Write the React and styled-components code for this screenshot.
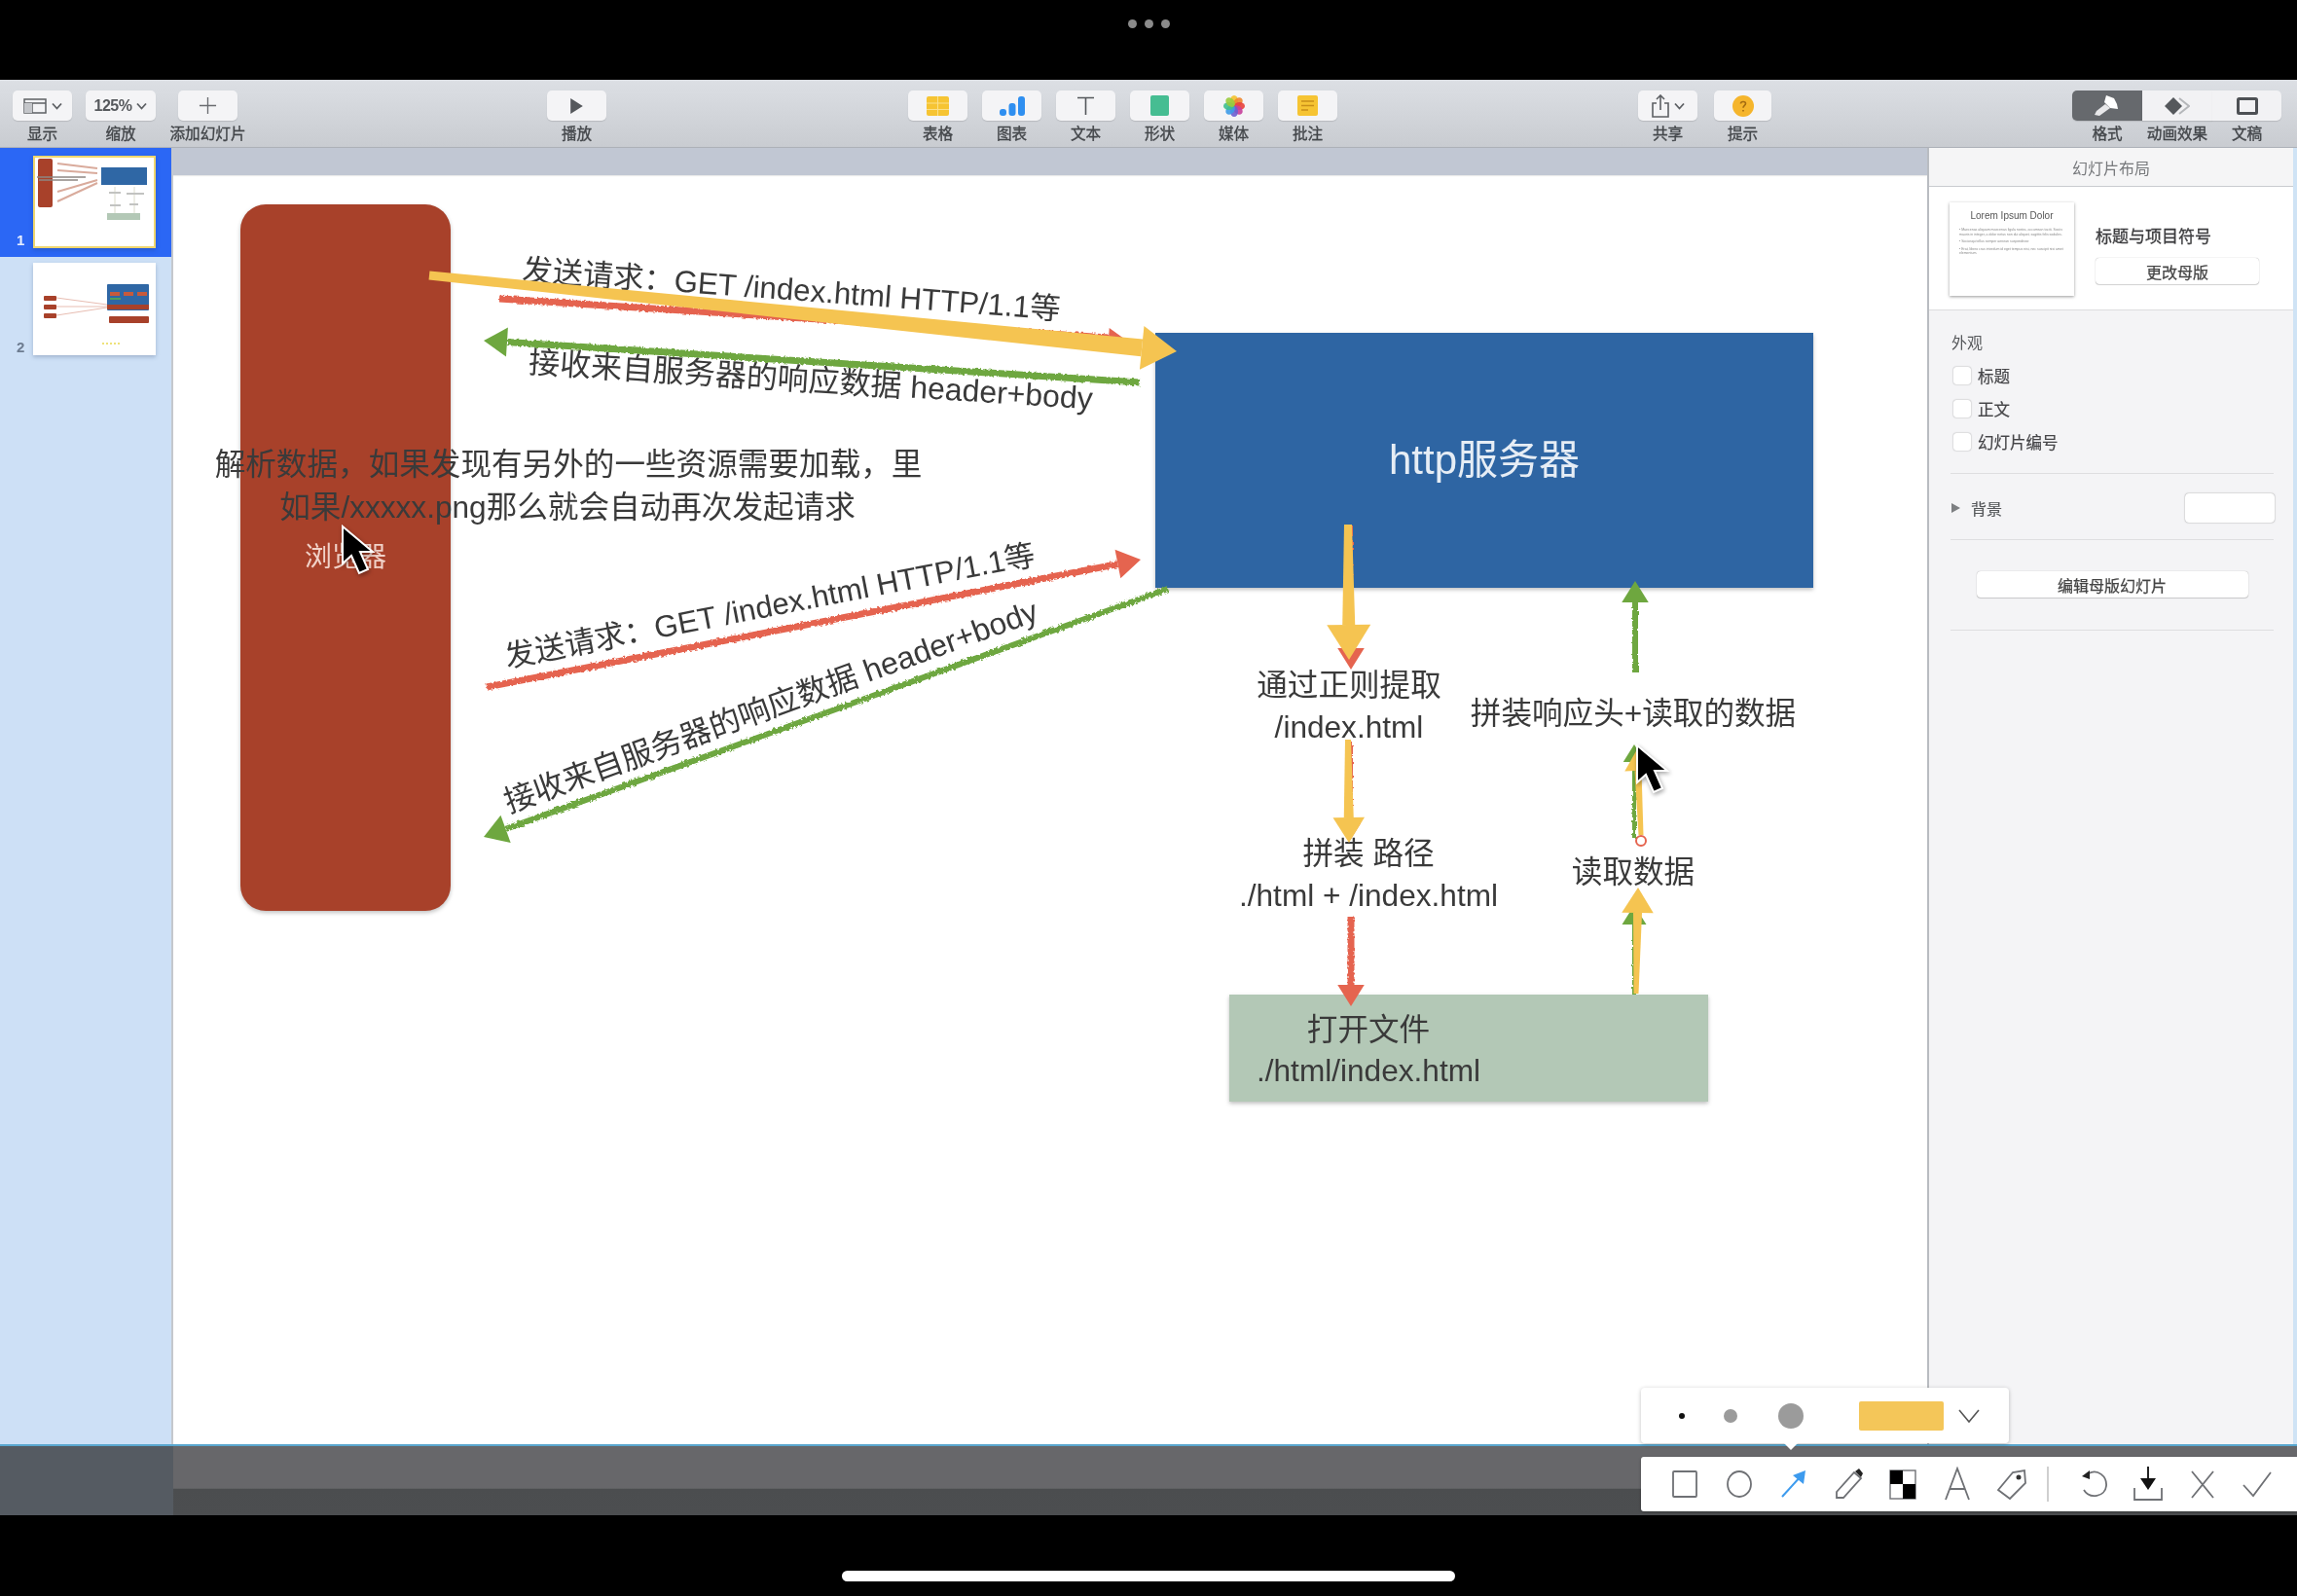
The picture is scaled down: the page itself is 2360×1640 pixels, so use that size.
import React from 'react';
import styled, { createGlobalStyle } from 'styled-components';

const FONT = '"Liberation Sans", "Noto Sans CJK SC", sans-serif';
const ORIGIN_X = 178;
const ORIGIN_Y = 152;

const GlobalStyle = createGlobalStyle`
  html, body { margin: 0; padding: 0; background: #000; }
  * { box-sizing: border-box; }
`;

const Page = styled.div`
  width: 2360px;
  height: 1640px;
  position: relative;
  overflow: hidden;
  display: flex;
  flex-direction: column;
  background: #000;
  font-family: ${FONT};
  filter: blur(0.55px);
`;

const StatusBar = styled.div`
  height: 82px;
  display: flex;
  justify-content: center;
  gap: 8px;
  padding-top: 20px;
`;

const StatusDot = styled.span`
  width: 9px;
  height: 9px;
  border-radius: 50%;
  background: #8b8b8b;
`;

const HomeArea = styled.div`
  flex: 1;
  display: flex;
  justify-content: center;
  padding-top: 57px;
`;

const HomeBar = styled.div`
  width: 630px;
  height: 11px;
  border-radius: 6px;
  background: #fff;
`;

const Toolbar = styled.div`
  height: 70px;
  display: flex;
  padding: 11px 0 0 13px;
  background: linear-gradient(#dcdfe4, #c9ccd1);
  border-bottom: 1px solid #adb1b8;
`;

const ToolItem = styled.div`
  width: ${(p) => p.$w || 61}px;
  margin-left: ${(p) => p.$ml || 0}px;
  display: flex;
  flex-direction: column;
  align-items: center;
`;

const ToolButton = styled.div`
  width: 100%;
  height: 31px;
  border-radius: 5px;
  background: #f4f4f6;
  box-shadow: 0 1px 1px rgba(0, 0, 0, 0.12);
  display: flex;
  align-items: center;
  justify-content: center;
  gap: 5px;
  font-size: 16px;
  font-weight: 700;
  letter-spacing: -0.5px;
  color: #55585c;
`;

const ToolLabel = styled.div`
  margin-top: 5px;
  font-size: 15.6px;
  line-height: 17px;
  white-space: nowrap;
  color: #43464a;
  -webkit-text-stroke: 0.35px #43464a;
`;

const Segmented = styled.div`
  margin-left: 309px;
  width: 215px;
  display: grid;
  grid-template-columns: 72px 72px 71px;
`;

const SegmentItem = styled.div`
  display: flex;
  flex-direction: column;
  align-items: center;
`;

const SegmentButton = styled.div`
  width: 100%;
  height: 31px;
  display: flex;
  align-items: center;
  justify-content: center;
  background: ${(p) => (p.$active ? '#66696d' : '#f2f2f4')};
  border-radius: ${(p) => p.$radius || '0'};
  box-shadow: 0 1px 1px rgba(0, 0, 0, 0.12);
`;

const Workspace = styled.div`
  height: 1332px;
  display: flex;
`;

const Sidebar = styled.div`
  width: 178px;
  background: #cde0f6;
  border-right: 2px solid #c4c8cd;
`;

const SlideRow = styled.div`
  height: ${(p) => p.$h}px;
  display: flex;
  align-items: flex-end;
  padding: 0 0 ${(p) => p.$pb}px 17px;
  gap: 8px;
  background: ${(p) => (p.$selected ? '#2b67f5' : 'transparent')};
`;

const SlideNumber = styled.span`
  width: 9px;
  font-size: 15px;
  line-height: 16px;
  color: ${(p) => (p.$selected ? '#e6eeff' : '#6d7c90')};
  font-weight: 700;
`;

const SlideThumb = styled.svg`
  width: 126px;
  height: 95px;
  display: block;
  background: #fff;
  box-shadow: 0 2px 4px rgba(30, 50, 90, 0.25);
  outline: ${(p) => (p.$selected ? '2px solid #efd66e' : 'none')};
  outline-offset: -2px;
`;

const Canvas = styled.div`
  flex: 1;
  position: relative;
  background: #fff;
  overflow: hidden;
`;

const CanvasHeader = styled.div`
  height: 28px;
  background: #c1c7d3;
  box-shadow: 0 1px 1px rgba(0, 0, 0, 0.08);
`;

const Block = styled.div`
  position: absolute;
  left: ${(p) => p.$x - ORIGIN_X}px;
  top: ${(p) => p.$y - ORIGIN_Y}px;
  width: ${(p) => p.$w}px;
  height: ${(p) => p.$h}px;
  background: ${(p) => p.$bg};
  border-radius: ${(p) => p.$radius || 0}px;
  box-shadow: 0 2px 4px rgba(0, 0, 0, 0.25);
`;

const SlideText = styled.div`
  position: absolute;
  left: ${(p) => p.$cx - ORIGIN_X}px;
  top: ${(p) => p.$cy - ORIGIN_Y}px;
  transform: translate(-50%, -50%) rotate(${(p) => p.$rot || 0}deg);
  white-space: pre;
  font-size: ${(p) => p.$size || 31.6}px;
  line-height: 1.2;
  color: ${(p) => p.$color || '#3a3a3a'};
`;

const ArrowLayer = styled.svg`
  position: absolute;
  left: 0;
  top: 0;
  width: 1802px;
  height: 1332px;
`;

const Cursor = styled.svg`
  position: absolute;
  left: ${(p) => p.$x - ORIGIN_X}px;
  top: ${(p) => p.$y - ORIGIN_Y}px;
  width: 46px;
  height: 56px;
  filter: drop-shadow(1px 2px 2px rgba(0, 0, 0, 0.35));
`;

const Inspector = styled.div`
  width: 380px;
  display: flex;
  flex-direction: column;
  background: #f4f4f6;
  border-left: 2px solid #b9bcc1;
  border-right: 4px solid #cfe3f5;
`;

const InspectorTitle = styled.div`
  height: 40px;
  display: flex;
  align-items: center;
  justify-content: center;
  background: #f5f5f6;
  border-bottom: 1px solid #c9cbcf;
  font-size: 16px;
  color: #77797c;
`;

const MasterSection = styled.div`
  height: 127px;
  display: flex;
  padding: 16px 0 0 21px;
  gap: 22px;
  background: #fff;
  border-bottom: 1px solid #dddddf;
`;

const MasterThumb = styled.div`
  width: 128px;
  height: 96px;
  padding: 8px 10px;
  background: #fff;
  box-shadow: 0 1px 3px rgba(0, 0, 0, 0.4);
  text-align: center;
  font-size: 10px;
  color: #555;
`;

const MasterBody = styled.div`
  margin-top: 7px;
  text-align: left;
  font-size: 3.5px;
  line-height: 4.5px;
  color: #888;
`;

const MasterBullet = styled.p`
  margin: 0 0 3px;
`;

const MasterInfo = styled.div`
  padding-top: 25px;
  width: 168px;
`;

const MasterName = styled.div`
  font-size: 17px;
  line-height: 22px;
  margin-bottom: 10px;
  white-space: nowrap;
  color: #3d3d3f;
  -webkit-text-stroke: 0.3px #3d3d3f;
`;

const PanelButton = styled.div`
  width: ${(p) => p.$w}px;
  height: 27px;
  margin: 0 auto;
  display: flex;
  align-items: center;
  justify-content: center;
  border-radius: 4px;
  background: #fff;
  box-shadow: 0 0 1px rgba(0, 0, 0, 0.4), 0 1px 1px rgba(0, 0, 0, 0.15);
  font-size: 16px;
  color: #444;
  -webkit-text-stroke: 0.25px #444;
`;

const PanelSection = styled.div`
  margin: 0 20px 0 22px;
  padding: ${(p) => p.$pad};
  border-bottom: 1px solid #dedee0;
`;

const SectionHeading = styled.div`
  margin-left: 1px;
  font-size: 16px;
  line-height: 20px;
  color: #55575a;
  margin-bottom: 6px;
`;

const CheckRow = styled.div`
  height: 34px;
  display: flex;
  align-items: center;
  gap: 7px;
  margin-left: 3px;
  font-size: 16.5px;
  color: #454548;
  -webkit-text-stroke: 0.2px #454548;
`;

const CheckBox = styled.span`
  width: 18px;
  height: 18px;
  border-radius: 3px;
  background: #fff;
  box-shadow: 0 0 1.5px rgba(0, 0, 0, 0.45);
`;

const BackgroundRow = styled.div`
  display: flex;
  align-items: center;
  font-size: 16px;
  color: #55575a;
  gap: 11px;
  -webkit-text-stroke: 0.2px #55575a;
`;

const Triangle = styled.span`
  margin-left: 1px;
  width: 0;
  height: 0;
  border-left: 9px solid #7d7f82;
  border-top: 5px solid transparent;
  border-bottom: 5px solid transparent;
`;

const ColorWell = styled.div`
  width: 92px;
  height: 30px;
  margin-left: auto;
  margin-right: -1px;
  border-radius: 4px;
  background: #fff;
  box-shadow: 0 0 1.5px rgba(0, 0, 0, 0.5);
`;

const BottomBand = styled.div`
  height: 73px;
  display: flex;
  border-top: 2px solid #59a7cf;
`;

const BandSide = styled.div`
  width: 178px;
  background: #555b62;
`;

const BandMain = styled.div`
  flex: 1;
  background: linear-gradient(#67676a 0, #67676a 61%, #4b4d4f 62%, #4c4e50 100%);
`;

const MarkupPopover = styled.div`
  position: absolute;
  left: 1686px;
  top: 1426px;
  width: 378px;
  height: 57px;
  display: flex;
  align-items: center;
  border-radius: 4px;
  background: #fff;
  box-shadow: 0 1px 4px rgba(0, 0, 0, 0.25);

  &::after {
    content: '';
    position: absolute;
    left: 147px;
    bottom: -7px;
    border-left: 7px solid transparent;
    border-right: 7px solid transparent;
    border-top: 7px solid #fff;
  }
`;

const SizeDot = styled.span`
  position: absolute;
  left: ${(p) => p.$x}px;
  width: ${(p) => p.$w}px;
  height: ${(p) => p.$h}px;
  border-radius: 50%;
  background: ${(p) => p.$color};
`;

const Swatch = styled.div`
  position: absolute;
  left: 224px;
  width: 87px;
  height: 30px;
  border-radius: 2px;
  background: #f4c659;
`;

const PopoverChevron = styled.svg`
  position: absolute;
  left: 325px;
  width: 24px;
  height: 16px;
`;

const MarkupBar = styled.div`
  position: absolute;
  left: 1686px;
  top: 1497px;
  width: 674px;
  height: 56px;
  display: flex;
  align-items: center;
  padding-left: 29px;
  border-radius: 3px 0 0 3px;
  background: #fff;
  box-shadow: 0 1px 3px rgba(0, 0, 0, 0.3);
`;

const MarkupIcon = styled.svg`
  width: 32px;
  height: 36px;
  margin-right: ${(p) => p.$gap || 24}px;
  flex: none;
`;

const MarkupDivider = styled.span`
  width: 2px;
  height: 36px;
  margin-right: 30px;
  background: #cfcfcf;
`;

const SLATE = '#5d6064';

const PanelIcon = () => (
  <svg width="24" height="16" viewBox="0 0 24 16">
    <rect x="1" y="1" width="22" height="14" fill="none" stroke={SLATE} strokeWidth="1.5" />
    <path d="M1 5H23M9 5V15" stroke={SLATE} strokeWidth="1.5" />
    <rect x="1" y="5" width="8" height="10" fill="#c4c6ca" />
  </svg>
);

const SmallChevron = () => (
  <svg width="11" height="8" viewBox="0 0 11 8">
    <path d="M1 1.5L5.5 6.5L10 1.5" fill="none" stroke={SLATE} strokeWidth="1.8" />
  </svg>
);

const PlusIcon = () => (
  <svg width="19" height="19" viewBox="0 0 20 20">
    <path d="M10 1V19M1 10H19" stroke="#6a6c70" strokeWidth="1.4" />
  </svg>
);

const PlayIcon = () => (
  <svg width="15" height="18" viewBox="0 0 16 20">
    <path d="M1 1L15 10L1 19Z" fill="#55585c" />
  </svg>
);

const TableIcon = () => (
  <svg width="23" height="20" viewBox="0 0 23 20">
    <rect width="23" height="20" rx="2" fill="#f6c433" />
    <path d="M0 7H23M0 13.5H23M11.5 0V20" stroke="#fbe08a" strokeWidth="1" />
  </svg>
);

const ChartIcon = () => (
  <svg width="26" height="20" viewBox="0 0 26 20">
    <rect x="0" y="13" width="7" height="7" rx="3" fill="#2f8ff0" />
    <rect x="9.5" y="7" width="7" height="13" rx="3" fill="#2f8ff0" />
    <rect x="19" y="0" width="7" height="20" rx="3" fill="#2f8ff0" />
  </svg>
);

const TextIcon = () => (
  <svg width="19" height="19" viewBox="0 0 19 19">
    <path d="M1 1.5H18M9.5 1.5V19" stroke="#55585c" strokeWidth="1.6" />
  </svg>
);

const ShapeIcon = () => (
  <svg width="19" height="21" viewBox="0 0 19 21">
    <rect width="19" height="21" rx="2" fill="#46bd92" />
  </svg>
);

const MediaIcon = () => (
  <svg width="22" height="22" viewBox="-11 -11 22 22">
    {['#f4c12e', '#f0862f', '#e8413c', '#c63f9b', '#6d5fd0', '#3d9be8', '#3fbf8e', '#9acb3c'].map((c, i) => (
      <ellipse key={c} cx="0" cy="-5.5" rx="4" ry="5.5" fill={c} opacity="0.9" transform={`rotate(${i * 45})`} />
    ))}
  </svg>
);

const NoteIcon = () => (
  <svg width="21" height="21" viewBox="0 0 21 21">
    <rect width="21" height="21" rx="2" fill="#f6c433" />
    <path d="M4 6H17M4 10.5H17M4 15H11" stroke="#c98f1b" strokeWidth="1.4" />
  </svg>
);

const ShareIcon = () => (
  <svg width="18" height="24" viewBox="0 0 18 24">
    <path d="M5 9H1V23H17V9H13M9 16V1M5 5L9 1L13 5" fill="none" stroke={SLATE} strokeWidth="1.6" />
  </svg>
);

const TipIcon = () => (
  <svg width="22" height="22" viewBox="0 0 22 22">
    <circle cx="11" cy="11" r="11" fill="#f5b52c" />
    <path d="M8.5 8.5C8.5 5.8 13.5 5.8 13.5 8.5C13.5 10.5 11 10.3 11 12.8M11 15V16.6" fill="none" stroke="#a46c12" strokeWidth="1.6" />
  </svg>
);

const BrushIcon = () => (
  <svg width="28" height="24" viewBox="0 0 28 24">
    <path d="M13 1L21 4L24 10L25 15L17 14L11 8Z" fill="#fff" />
    <path d="M12 10L17 14L6 22L1 21L3 17Z" fill="#e8e8ea" />
  </svg>
);

const DiamondIcon = () => (
  <svg width="26" height="18" viewBox="0 0 26 18">
    <path d="M15 1L25 9L15 17" fill="none" stroke="#b5b7ba" strokeWidth="2" />
    <path d="M9 0L18 9L9 18L0 9Z" fill="#55585c" />
  </svg>
);

const DocIcon = () => (
  <svg width="22" height="18" viewBox="0 0 22 18">
    <rect x="1.5" y="1.5" width="19" height="15" rx="1" fill="none" stroke="#4d5054" strokeWidth="3" />
  </svg>
);

const CursorIcon = ({ x, y }) => (
  <Cursor $x={x} $y={y} viewBox="0 0 46 56">
    <path d="M2 2L2 40L11 32L19 50L28 46L20 28L33 28Z" fill="#000" stroke="#fff" strokeWidth="2" />
  </Cursor>
);

// yellow marker arrows get wider toward the head, the others are a plain line
const Arrow = ({ x1, y1, x2, y2, color, width, head, tail, rough }) => {
  const len = Math.hypot(x2 - x1, y2 - y1);
  const ux = (x2 - x1) / len;
  const uy = (y2 - y1) / len;
  const nx = -uy;
  const ny = ux;
  const bx = x2 - ux * head;
  const by = y2 - uy * head;
  const startW = tail ?? width;
  const shaft = [
    [x1 + (nx * startW) / 2, y1 + (ny * startW) / 2],
    [bx + (nx * width) / 2, by + (ny * width) / 2],
    [bx - (nx * width) / 2, by - (ny * width) / 2],
    [x1 - (nx * startW) / 2, y1 - (ny * startW) / 2],
  ];
  const tip = [
    [x2, y2],
    [bx + (nx * head) / 1.6, by + (ny * head) / 1.6],
    [bx - (nx * head) / 1.6, by - (ny * head) / 1.6],
  ];
  const toPoints = (list) => list.map((p) => p.join(',')).join(' ');
  return (
    <g>
      <polygon points={toPoints(shaft)} fill={color} filter={rough ? 'url(#rough)' : undefined} />
      <polygon points={toPoints(tip)} fill={color} />
    </g>
  );
};

const RED = '#e5644f';
const GREEN = '#6ea73f';
const YELLOW = '#f5c451';

const Arrows = () => (
  <ArrowLayer viewBox={`${ORIGIN_X} ${ORIGIN_Y} 1802 1332`}>
    <defs>
      <filter id="rough" x="-5%" y="-100%" width="110%" height="300%" filterUnits="objectBoundingBox" primitiveUnits="userSpaceOnUse">
        <feTurbulence type="fractalNoise" baseFrequency="0.35" numOctaves="2" seed="4" />
        <feDisplacementMap in="SourceGraphic" scale="4" />
      </filter>
    </defs>
    <Arrow x1={513} y1={307} x2={1155} y2={348} color={RED} width={7} head={16} rough />
    <Arrow x1={1171} y1={393} x2={497} y2={350} color={GREEN} width={7} head={24} rough />
    <Arrow x1={441} y1={283} x2={1209} y2={361} color={YELLOW} width={18} tail={9} head={36} />
    <Arrow x1={500} y1={706} x2={1172} y2={575} color={RED} width={7} head={24} rough />
    <Arrow x1={1200} y1={605} x2={497} y2={860} color={GREEN} width={6} head={24} rough />
    <Arrow x1={1388} y1={540} x2={1388} y2={688} color={RED} width={4} head={22} rough />
    <Arrow x1={1385} y1={539} x2={1386} y2={678} color={YELLOW} width={13} tail={8} head={36} />
    <Arrow x1={1388} y1={762} x2={1388} y2={862} color={RED} width={4} head={16} rough />
    <Arrow x1={1385} y1={760} x2={1386} y2={866} color={YELLOW} width={10} tail={6} head={26} />
    <Arrow x1={1388} y1={942} x2={1388} y2={1034} color={RED} width={7} head={22} rough />
    <Arrow x1={1680} y1={691} x2={1680} y2={597} color={GREEN} width={6} head={22} rough />
    <Arrow x1={1679} y1={861} x2={1679} y2={765} color={GREEN} width={4} head={18} rough />
    <Arrow x1={1686} y1={858} x2={1682} y2={770} color={YELLOW} width={7} tail={5} head={22} />
    <Arrow x1={1679} y1={1022} x2={1679} y2={930} color={GREEN} width={4} head={20} rough />
    <Arrow x1={1681} y1={1021} x2={1683} y2={912} color={YELLOW} width={9} tail={5} head={26} />
    <circle cx="1686" cy="864" r="5" fill="#fff" stroke={RED} strokeWidth="2" />
  </ArrowLayer>
);

const FirstThumb = () => (
  <SlideThumb $selected viewBox="34 160 126 95">
    <rect x="39" y="163" width="15" height="50" rx="2" fill="#a8412a" />
    <rect x="104" y="172" width="47" height="18" fill="#2f67a5" />
    <rect x="110" y="219" width="34" height="7" fill="#b3c8b6" />
    <path d="M59 168L100 173M59 175L100 178M59 197L100 185M59 207L100 188" stroke="#d9ab9c" strokeWidth="2" />
    <path d="M38 182L88 182M40 185L80 185" stroke="#8d8682" strokeWidth="1.6" />
    <path d="M118 192V219M138 192V219" stroke="#dcdccc" strokeWidth="1" />
    <path d="M112 198H124M130 199H148M113 211H124M133 210H142" stroke="#c2c3c1" strokeWidth="2" />
  </SlideThumb>
);

const SecondThumb = () => (
  <SlideThumb viewBox="34 270 126 95">
    <rect x="110" y="292" width="43" height="27" rx="1" fill="#2f67a5" />
    <rect x="110" y="313" width="43" height="5" fill="#a8412a" />
    <path d="M113 302H123M127 302H137M141 302H151" stroke="#c65a3c" strokeWidth="4" />
    <path d="M113 307H124" stroke="#4f9e5a" strokeWidth="2" />
    <rect x="112" y="325" width="41" height="7" rx="1" fill="#a8412a" />
    <rect x="45" y="304" width="13" height="5" rx="1" fill="#a8412a" />
    <rect x="45" y="313" width="13" height="5" rx="1" fill="#a8412a" />
    <rect x="45" y="322" width="13" height="5" rx="1" fill="#a8412a" />
    <path d="M58 306L110 313M58 315L110 315M58 324L110 316" stroke="#e8bdb2" strokeWidth="1" />
    <path d="M105 353H125" stroke="#eee27a" strokeWidth="2" strokeDasharray="2 2" />
  </SlideThumb>
);

const TOOLS = [
  ['表格', <TableIcon key="t" />],
  ['图表', <ChartIcon key="c" />],
  ['文本', <TextIcon key="x" />],
  ['形状', <ShapeIcon key="s" />],
  ['媒体', <MediaIcon key="m" />],
  ['批注', <NoteIcon key="n" />],
];

const TopToolbar = () => (
  <Toolbar>
    <ToolItem>
      <ToolButton><PanelIcon /><SmallChevron /></ToolButton>
      <ToolLabel>显示</ToolLabel>
    </ToolItem>
    <ToolItem $w={72} $ml={14}>
      <ToolButton>125%<SmallChevron /></ToolButton>
      <ToolLabel>缩放</ToolLabel>
    </ToolItem>
    <ToolItem $ml={23}>
      <ToolButton><PlusIcon /></ToolButton>
      <ToolLabel>添加幻灯片</ToolLabel>
    </ToolItem>
    <ToolItem $ml={318}>
      <ToolButton><PlayIcon /></ToolButton>
      <ToolLabel>播放</ToolLabel>
    </ToolItem>
    {TOOLS.map(([label, icon], i) => (
      <ToolItem key={label} $ml={i === 0 ? 310 : 15}>
        <ToolButton>{icon}</ToolButton>
        <ToolLabel>{label}</ToolLabel>
      </ToolItem>
    ))}
    <ToolItem $ml={309}>
      <ToolButton><ShareIcon /><SmallChevron /></ToolButton>
      <ToolLabel>共享</ToolLabel>
    </ToolItem>
    <ToolItem $w={59} $ml={17}>
      <ToolButton><TipIcon /></ToolButton>
      <ToolLabel>提示</ToolLabel>
    </ToolItem>
    <Segmented>
      <SegmentItem>
        <SegmentButton $active $radius="5px 0 0 5px"><BrushIcon /></SegmentButton>
        <ToolLabel>格式</ToolLabel>
      </SegmentItem>
      <SegmentItem>
        <SegmentButton><DiamondIcon /></SegmentButton>
        <ToolLabel>动画效果</ToolLabel>
      </SegmentItem>
      <SegmentItem>
        <SegmentButton $radius="0 5px 5px 0"><DocIcon /></SegmentButton>
        <ToolLabel>文稿</ToolLabel>
      </SegmentItem>
    </Segmented>
  </Toolbar>
);

const Slide = () => (
  <Canvas>
    <CanvasHeader />
    <Block $x={247} $y={210} $w={216} $h={726} $radius={26} $bg="#a8412a" />
    <Block $x={1187} $y={342} $w={676} $h={262} $bg="#2e65a3" />
    <Block $x={1263} $y={1022} $w={492} $h={110} $bg="#b3c8b6" />

    <SlideText $cx={813} $cy={298} $rot={4.2} $size={31.3}>发送请求：GET /index.html HTTP/1.1等</SlideText>
    <SlideText $cx={833} $cy={391} $rot={3.7} $size={32}>接收来自服务器的响应数据 header+body</SlideText>
    <SlideText $cx={584} $cy={478}>解析数据，如果发现有另外的一些资源需要加载，里</SlideText>
    <SlideText $cx={583} $cy={522}>如果/xxxxx.png那么就会自动再次发起请求</SlideText>
    <SlideText $cx={355} $cy={573} $size={28} $color="#f1d2c8">浏览器</SlideText>
    <SlideText $cx={791} $cy={623} $rot={-11} $size={31.3}>发送请求：GET /index.html HTTP/1.1等</SlideText>
    <SlideText $cx={792} $cy={726} $rot={-20} $size={32}>接收来自服务器的响应数据 header+body</SlideText>
    <SlideText $cx={1525} $cy={473} $size={42} $color="#e6edf5">http服务器</SlideText>
    <SlideText $cx={1386} $cy={705}>通过正则提取</SlideText>
    <SlideText $cx={1386} $cy={748}>/index.html</SlideText>
    <SlideText $cx={1678} $cy={734}>拼装响应头+读取的数据</SlideText>
    <SlideText $cx={1406} $cy={878}>拼装 路径</SlideText>
    <SlideText $cx={1406} $cy={921}>./html + /index.html</SlideText>
    <SlideText $cx={1678} $cy={897}>读取数据</SlideText>
    <SlideText $cx={1406} $cy={1059}>打开文件</SlideText>
    <SlideText $cx={1406} $cy={1101}>./html/index.html</SlideText>

    <Arrows />
    <CursorIcon x={350} y={539} />
    <CursorIcon x={1680} y={764} />
  </Canvas>
);

const InspectorPanel = () => (
  <Inspector>
    <InspectorTitle>幻灯片布局</InspectorTitle>
    <MasterSection>
      <MasterThumb>
        Lorem Ipsum Dolor
        <MasterBody>
          <MasterBullet>• Maecenas aliquam maecenas ligula nostra, accumsan taciti. Sociis mauris in integer, a dolor netus non dui aliquet, sagittis felis sodales.</MasterBullet>
          <MasterBullet>• Sociosqu tellus semper aenean suspendisse</MasterBullet>
          <MasterBullet>• Erat, libero cras interdum id eget tempus nisi, nec suscipit nisi amet elementum.</MasterBullet>
        </MasterBody>
      </MasterThumb>
      <MasterInfo>
        <MasterName>标题与项目符号</MasterName>
        <PanelButton $w={168}>更改母版</PanelButton>
      </MasterInfo>
    </MasterSection>
    <PanelSection $pad="24px 0 15px">
      <SectionHeading>外观</SectionHeading>
      <CheckRow><CheckBox />标题</CheckRow>
      <CheckRow><CheckBox />正文</CheckRow>
      <CheckRow><CheckBox />幻灯片编号</CheckRow>
    </PanelSection>
    <PanelSection $pad="20px 0 17px">
      <BackgroundRow><Triangle />背景<ColorWell /></BackgroundRow>
    </PanelSection>
    <PanelSection $pad="32px 0 33px">
      <PanelButton $w={279}>编辑母版幻灯片</PanelButton>
    </PanelSection>
  </Inspector>
);

const GREY = '#6f7175';

const MarkupTools = () => (
  <>
    <MarkupPopover>
      <SizeDot $x={39} $w={6} $h={6} $color="#111" />
      <SizeDot $x={85} $w={14} $h={14} $color="#9b9b9b" />
      <SizeDot $x={141} $w={26} $h={26} $color="#9b9b9b" />
      <Swatch />
      <PopoverChevron viewBox="0 0 24 16">
        <path d="M2 2L12 14L22 2" fill="none" stroke="#555" strokeWidth="1.6" />
      </PopoverChevron>
    </MarkupPopover>
    <MarkupBar>
      <MarkupIcon viewBox="0 0 32 36">
        <rect x="4" y="5" width="24" height="26" rx="1" fill="none" stroke={GREY} strokeWidth="1.8" />
      </MarkupIcon>
      <MarkupIcon viewBox="0 0 32 36">
        <ellipse cx="16" cy="18" rx="12" ry="13" fill="none" stroke={GREY} strokeWidth="1.8" />
      </MarkupIcon>
      <MarkupIcon viewBox="0 0 32 36">
        <path d="M4 31L24 9" stroke="#3d9bee" strokeWidth="2" />
        <path d="M28 4L26 18L15 9Z" fill="#3d9bee" />
      </MarkupIcon>
      <MarkupIcon viewBox="0 0 32 36">
        <path d="M4 26L22 6L29 12L11 32L4 32Z" fill="none" stroke={GREY} strokeWidth="1.8" />
        <path d="M23 5L27 2L31 7L29 11Z" fill="#222" />
      </MarkupIcon>
      <MarkupIcon viewBox="0 0 32 36">
        <rect x="3" y="4" width="26" height="29" fill="#fff" stroke={GREY} strokeWidth="1.4" />
        <path d="M3 4H16V18H3ZM16 18H29V33H16Z" fill="#000" />
      </MarkupIcon>
      <MarkupIcon viewBox="0 0 32 36">
        <path d="M4 34L16 2L28 34M8 23H24" fill="none" stroke={GREY} strokeWidth="1.8" />
      </MarkupIcon>
      <MarkupIcon $gap={20} viewBox="0 0 32 36">
        <path d="M2 24L17 6L29 4L30 17L14 33Z" fill="none" stroke={GREY} strokeWidth="1.8" />
        <circle cx="23" cy="11" r="2.5" fill="#333" />
      </MarkupIcon>
      <MarkupDivider />
      <MarkupIcon viewBox="0 0 32 36">
        <path d="M11 7C20 2 30 10 29 20C28 31 12 34 6 24" fill="none" stroke={GREY} strokeWidth="1.8" />
        <path d="M4 10L12 4L12 13Z" fill="#222" />
      </MarkupIcon>
      <MarkupIcon viewBox="0 0 32 36">
        <path d="M16 0V14" stroke="#222" strokeWidth="2" />
        <path d="M8 12H24L16 24Z" fill="#111" />
        <path d="M2 22V34H30V22" fill="none" stroke={GREY} strokeWidth="1.8" />
      </MarkupIcon>
      <MarkupIcon viewBox="0 0 32 36">
        <path d="M5 5L27 32M27 5L5 32" stroke={GREY} strokeWidth="1.8" />
      </MarkupIcon>
      <MarkupIcon viewBox="0 0 32 36">
        <path d="M2 19L12 30L30 6" fill="none" stroke={GREY} strokeWidth="1.8" />
      </MarkupIcon>
    </MarkupBar>
  </>
);

export default function App() {
  return (
    <>
      <GlobalStyle />
      <Page>
        <StatusBar>
          <StatusDot />
          <StatusDot />
          <StatusDot />
        </StatusBar>
        <TopToolbar />
        <Workspace>
          <Sidebar>
            <SlideRow $selected $h={112} $pb={9}>
              <SlideNumber $selected>1</SlideNumber>
              <FirstThumb />
            </SlideRow>
            <SlideRow $h={101} $pb={0}>
              <SlideNumber>2</SlideNumber>
              <SecondThumb />
            </SlideRow>
          </Sidebar>
          <Slide />
          <InspectorPanel />
        </Workspace>
        <BottomBand>
          <BandSide />
          <BandMain />
        </BottomBand>
        <HomeArea>
          <HomeBar />
        </HomeArea>
        <MarkupTools />
      </Page>
    </>
  );
}
